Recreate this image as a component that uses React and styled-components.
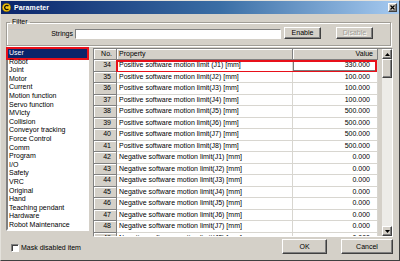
import React from 'react';
import styled, { createGlobalStyle, css } from 'styled-components';

const GlobalStyle = createGlobalStyle`
  html, body {
    margin: 0;
    padding: 0;
  }
  body {
    font-family: "Liberation Sans", Arial, sans-serif;
    font-size: 7px;
    color: #000;
    background: #d4d0c8;
  }
`;

const raised = css`
  border: 1px solid;
  border-color: #fff #404040 #404040 #fff;
  box-shadow: inset -1px -1px 0 #808080;
`;

const Window = styled.div`
  box-sizing: border-box;
  width: 400px;
  height: 261px;
  background: #d4d0c8;
  border: 1px solid;
  border-color: #e4e2dc #404040 #404040 #e4e2dc;
  display: flex;
  flex-direction: column;
  overflow: hidden;
`;

const TitleBar = styled.div`
  height: 13px;
  display: flex;
  align-items: center;
  gap: 3px;
  padding: 0 2px 0 1px;
  background: linear-gradient(to right, #0a246a, #3a6ea5 55%, #a6caf0);
  color: #fff;
  font-weight: bold;
  font-size: 7px;
`;

const TitleText = styled.span`
  flex: 1;
  letter-spacing: 0.1px;
`;

const CloseButton = styled.div`
  ${raised};
  box-sizing: border-box;
  width: 9px;
  height: 9px;
  background: #d4d0c8;
  display: flex;
  align-items: center;
  justify-content: center;
`;

const Body = styled.div`
  flex: 1;
  display: flex;
  flex-direction: column;
  padding: 0 6px 0 5px;
`;

const Group = styled.fieldset`
  margin: 4px 2px 0 0;
  padding: 1px 0 6px 0;
  border: 1px solid #a09d96;
  box-shadow: inset 1px 1px 0 #fff, 1px 1px 0 #fff;
  min-width: 0;
`;

const Legend = styled.legend`
  padding: 0 2px;
  margin-left: 3px;
  line-height: 8px;
  font-size: 7px;
`;

const FilterRow = styled.div`
  display: flex;
  align-items: flex-end;
`;

const FieldLabel = styled.label`
  flex: 0 0 66px;
  text-align: right;
  line-height: 10px;
  margin-right: 2px;
`;

const TextInput = styled.input`
  box-sizing: border-box;
  width: 206px;
  height: 10px;
  margin: 0 3px 0 0;
  padding: 0;
  background: #fff;
  border: 1px solid;
  border-color: #808080 #fff #fff #808080;
  outline: none;
`;

const Button = styled.button`
  ${raised};
  box-sizing: border-box;
  width: ${(p) => p.$w}px;
  height: ${(p) => p.$h || 12}px;
  margin: 0 ${(p) => p.$gap || 0}px 0 0;
  padding: 0;
  background: #d4d0c8;
  font-family: "Liberation Sans", Arial, sans-serif;
  font-size: 7px;
  line-height: 8px;
  color: ${(p) => (p.disabled ? '#a19e98' : '#000')};
  text-shadow: ${(p) => (p.disabled ? '1px 1px 0 #fff' : 'none')};
`;

const Main = styled.div`
  display: flex;
  align-items: flex-start;
  gap: 4px;
  margin-top: 1px;
`;

const List = styled.ul`
  box-sizing: border-box;
  width: 83px;
  margin: 0;
  padding: 0;
  list-style: none;
  background: #fff;
  border: 2px solid;
  border-color: #808080 #fff #fff #808080;
`;

const ListItem = styled.li`
  position: relative;
  height: 8.6px;
  line-height: 8.6px;
  padding-left: 1px;
  white-space: nowrap;
  ${(p) =>
    p.$selected &&
    css`
      background: #0a246a;
      color: #fff;
      &::after {
        content: '';
        position: absolute;
        left: -2px;
        right: -2px;
        top: -2px;
        height: 9px;
        border: 2px solid #e8101a;
      }
    `}
`;

const GridFrame = styled.div`
  box-sizing: border-box;
  width: 300px;
  height: 189px;
  margin-top: 1px;
  display: flex;
  gap: 4px;
  border: 1px solid;
  border-color: #808080 #fff #fff #808080;
  background: #d4d0c8;
  overflow: hidden;
`;

const Rows = styled.div`
  width: 284px;
  flex: none;
  overflow: hidden;
`;

const Row = styled.div`
  position: relative;
  display: grid;
  grid-template-columns: 23px 176px 85px;
  height: ${(p) => (p.$header ? 11 : 11.5)}px;
  ${(p) =>
    p.$marked &&
    css`
      &::after {
        content: '';
        position: absolute;
        left: 22px;
        right: 1px;
        top: 0;
        height: 9px;
        border: 2px solid #e8101a;
      }
    `}
`;

const HeadCell = styled.div`
  box-sizing: border-box;
  background: #d4d0c8;
  border-right: 1px solid #808080;
  border-bottom: 1px solid #808080;
  box-shadow: inset 1px 1px 0 #fff;
  padding: 0 ${(p) => (p.$right ? 4 : 2)}px;
  text-align: ${(p) => (p.$right ? 'right' : 'left')};
  line-height: 10px;
  white-space: nowrap;
`;

const NumCell = styled(HeadCell)`
  padding-right: 5px;
  line-height: 10.5px;
`;

const Cell = styled.div`
  box-sizing: border-box;
  background: #fff;
  border-right: 1px solid #d8d6d0;
  border-bottom: 1px solid #d8d6d0;
  padding: 0 ${(p) => (p.$right ? 7 : 2)}px;
  text-align: ${(p) => (p.$right ? 'right' : 'left')};
  line-height: 10.5px;
  white-space: nowrap;
  overflow: hidden;
  ${(p) =>
    p.$focus &&
    css`
      box-shadow: inset 0 0 0 1px #7a7a7a;
    `}
`;

const ScrollBar = styled.div`
  width: 10px;
  display: flex;
  flex-direction: column;
  background: #edece8;
`;

const ScrollButton = styled.div`
  ${raised};
  box-sizing: border-box;
  width: 10px;
  height: 10px;
  background: #d4d0c8;
  display: flex;
  align-items: center;
  justify-content: center;
  flex: none;
`;

const Thumb = styled.div`
  ${raised};
  box-sizing: border-box;
  height: 19px;
  background: #d4d0c8;
`;

const Track = styled.div`
  flex: 1;
`;

const Footer = styled.div`
  display: flex;
  align-items: flex-start;
`;

const CheckRow = styled.label`
  flex: 1;
  display: flex;
  align-items: center;
  gap: 2px;
  margin: 7px 0 0 5px;
  line-height: 8px;
`;

const CheckBox = styled.span`
  box-sizing: border-box;
  width: 8px;
  height: 8px;
  background: #fff;
  border: 1px solid;
  border-color: #808080 #fff #fff #808080;
  box-shadow: inset 1px 1px 0 #404040;
`;

const FooterButtons = styled.div`
  display: flex;
  margin-top: 2px;
`;

const categories = [
  'User', 'Robot', 'Joint', 'Motor', 'Current', 'Motion function', 'Servo function',
  'MVlcty', 'Collision', 'Conveyor tracking', 'Force Control', 'Comm', 'Program',
  'I/O', 'Safety', 'VRC', 'Original', 'Hand', 'Teaching pendant', 'Hardware',
  'Robot Maintenance',
];

const params = [
  [34, 'Positive software motion limit (J1) [mm]', '330.000'],
  [35, 'Positive software motion limit(J2) [mm]', '100.000'],
  [36, 'Positive software motion limit(J3) [mm]', '100.000'],
  [37, 'Positive software motion limit(J4) [mm]', '100.000'],
  [38, 'Positive software motion limit(J5) [mm]', '500.000'],
  [39, 'Positive software motion limit(J6) [mm]', '500.000'],
  [40, 'Positive software motion limit(J7) [mm]', '500.000'],
  [41, 'Positive software motion limit(J8) [mm]', '500.000'],
  [42, 'Negative software motion limit(J1) [mm]', '0.000'],
  [43, 'Negative software motion limit(J2) [mm]', '0.000'],
  [44, 'Negative software motion limit(J3) [mm]', '0.000'],
  [45, 'Negative software motion limit(J4) [mm]', '0.000'],
  [46, 'Negative software motion limit(J5) [mm]', '0.000'],
  [47, 'Negative software motion limit(J6) [mm]', '0.000'],
  [48, 'Negative software motion limit(J7) [mm]', '0.000'],
  [49, 'Negative software motion limit(J8) [mm]', '0.000'],
];

function AppIcon() {
  return (
    <svg width="9" height="9" viewBox="0 0 9 9">
      <circle cx="4.5" cy="4.5" r="4.3" fill="#f2c410" stroke="#6b5200" strokeWidth="0.6" />
      <path d="M6.4 3.2 A2.1 2.1 0 1 0 6.4 5.8" fill="none" stroke="#1a1400" strokeWidth="1.3" />
    </svg>
  );
}

function Arrow({ down }) {
  return (
    <svg width="5" height="3" viewBox="0 0 5 3">
      <path d={down ? 'M0 0 H5 L2.5 3 Z' : 'M0 3 H5 L2.5 0 Z'} fill="#000" />
    </svg>
  );
}

export default function App() {
  return (
    <Window>
      <GlobalStyle />
      <TitleBar>
        <AppIcon />
        <TitleText>Parameter</TitleText>
        <CloseButton>
          <svg width="5" height="5" viewBox="0 0 5 5">
            <path d="M0.5 0.5 L4.5 4.5 M4.5 0.5 L0.5 4.5" stroke="#000" strokeWidth="1.2" />
          </svg>
        </CloseButton>
      </TitleBar>
      <Body>
        <Group>
          <Legend>Filter</Legend>
          <FilterRow>
            <FieldLabel>Strings</FieldLabel>
            <TextInput type="text" />
            <Button $w={37} $gap={15}>Enable</Button>
            <Button $w={37} disabled>Disable</Button>
          </FilterRow>
        </Group>
        <Main>
          <List>
            {categories.map((name, i) => (
              <ListItem key={name} $selected={i === 0}>{name}</ListItem>
            ))}
          </List>
          <GridFrame>
            <Rows>
              <Row $header>
                <HeadCell $right>No.</HeadCell>
                <HeadCell>Property</HeadCell>
                <HeadCell $right>Value</HeadCell>
              </Row>
              {params.map(([no, name, value], i) => (
                <Row key={no} $marked={i === 0}>
                  <NumCell $right>{no}</NumCell>
                  <Cell>{name}</Cell>
                  <Cell $right $focus={i === 0}>{value}</Cell>
                </Row>
              ))}
            </Rows>
            <ScrollBar>
              <ScrollButton><Arrow /></ScrollButton>
              <Thumb />
              <Track />
              <ScrollButton><Arrow down /></ScrollButton>
            </ScrollBar>
          </GridFrame>
        </Main>
        <Footer>
          <CheckRow>
            <CheckBox />
            Mask disabled item
          </CheckRow>
          <FooterButtons>
            <Button $w={45} $h={15} $gap={14}>OK</Button>
            <Button $w={52} $h={15}>Cancel</Button>
          </FooterButtons>
        </Footer>
      </Body>
    </Window>
  );
}
